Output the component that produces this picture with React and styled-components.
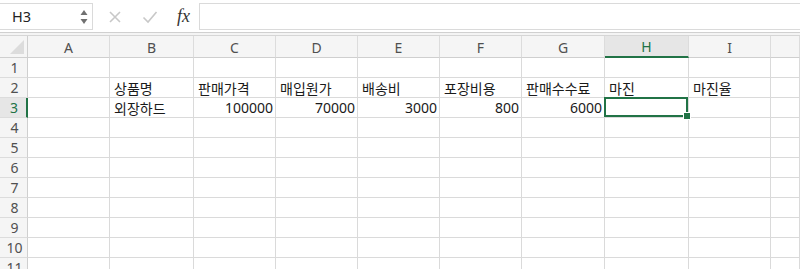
import styled, { createGlobalStyle } from "styled-components";

const GlobalStyle = createGlobalStyle`
  html, body {
    margin: 0;
    padding: 0;
    background: #ffffff;
    overflow: hidden;
  }
  body {
    font-family: "Noto Sans", "Noto Sans CJK KR", sans-serif;
  }
`;

const COLUMNS = ["A", "B", "C", "D", "E", "F", "G", "H", "I", ""];
const WIDTHS = [82, 84, 82, 82, 82, 82, 83, 84, 82];
const SELECTED_COL = "H";
const SELECTED_ROW = 3;

// cell values keyed by row, then column
const DATA = {
  2: {
    B: "상품명",
    C: "판매가격",
    D: "매입원가",
    E: "배송비",
    F: "포장비용",
    G: "판매수수료",
    H: "마진",
    I: "마진율",
  },
  3: {
    B: "외장하드",
    C: 100000,
    D: 70000,
    E: 3000,
    F: 800,
    G: 6000,
  },
};

function App() {
  const rows = Array.from({ length: 11 }, (_, i) => i + 1);

  return (
    <>
      <GlobalStyle />
      <Page>
        <FormulaBar>
          <NameBox>
            <span>H3</span>
            <Spinner>
              <svg width="8" height="16" viewBox="0 0 8 16">
                <path d="M4 1 L7.5 6 L0.5 6 Z" fill="#707070" />
                <path d="M4 15 L7.5 10 L0.5 10 Z" fill="#707070" />
              </svg>
            </Spinner>
          </NameBox>
          <Tools>
            <svg width="14" height="14" viewBox="0 0 14 14">
              <path d="M2 2 L12 12 M12 2 L2 12" stroke="#c8c8c8" strokeWidth="1.6" />
            </svg>
            <svg width="16" height="14" viewBox="0 0 16 14">
              <path d="M1.5 7.5 L6 12 L14.5 2" stroke="#c8c8c8" strokeWidth="1.6" fill="none" />
            </svg>
            <Fx>fx</Fx>
          </Tools>
          <FormulaInput />
        </FormulaBar>
        <Divider />
        <Grid>
          <Corner />
          {COLUMNS.map((c) => (
            <ColHeader key={c || "rest"} $active={c === SELECTED_COL}>
              {c}
            </ColHeader>
          ))}
          {rows.map((r) => (
            <Row key={r} r={r} />
          ))}
        </Grid>
      </Page>
    </>
  );
}

function Row({ r }) {
  return (
    <>
      <RowHeader $active={r === SELECTED_ROW}>{r}</RowHeader>
      {COLUMNS.map((c) => {
        const value = DATA[r] && DATA[r][c];
        const isNum = typeof value === "number";
        return (
          <Cell
            key={c || "rest"}
            $num={isNum}
            $selected={r === SELECTED_ROW && c === SELECTED_COL}
          >
            {value}
          </Cell>
        );
      })}
    </>
  );
}

export default App;

// Styled Components
const Page = styled.div`
  width: 800px;
  height: 269px;
  overflow: hidden;
  background: #ffffff;
`;

const FormulaBar = styled.div`
  display: flex;
  align-items: center;
  height: 32px;
  padding-top: 1px;
  box-sizing: border-box;
  background: #ffffff;
`;

const NameBox = styled.div`
  display: flex;
  align-items: center;
  justify-content: space-between;
  width: 93px;
  height: 27px;
  box-sizing: border-box;
  border: 1px solid #dadada;
  border-left: none;
  padding: 0 4px 0 12px;
  font-size: 14.5px;
  color: #222;

  span {
    line-height: 1;
  }
`;

const Spinner = styled.div`
  display: flex;
  align-items: center;
`;

const Tools = styled.div`
  display: flex;
  align-items: center;
  gap: 20px;
  width: 106px;
  box-sizing: border-box;
  padding-left: 15px;
`;

const Fx = styled.span`
  font-family: "Liberation Serif", "DejaVu Serif", serif;
  font-style: italic;
  font-size: 18px;
  color: #333;
  margin-left: -1px;
`;

const FormulaInput = styled.div`
  flex: 1;
  height: 27px;
  box-sizing: border-box;
  border: 1px solid #dadada;
  border-right: none;
`;

const Divider = styled.div`
  height: 4px;
  box-sizing: border-box;
  border-top: 1px solid #d0d0d0;
  border-bottom: 1px solid #d6d6d6;
  background: #f4f4f4;
`;

const Grid = styled.div`
  display: grid;
  grid-template-columns: 28px ${WIDTHS.map((w) => `${w}px`).join(" ")} 1fr;
  grid-template-rows: 22px;
  grid-auto-rows: 20px;
`;

const Corner = styled.div`
  position: relative;
  background: #f5f5f5;
  border-right: 1px solid #cfcfcf;
  border-bottom: 1px solid #cfcfcf;
  box-sizing: border-box;

  &::after {
    content: "";
    position: absolute;
    right: 3px;
    bottom: 3px;
    width: 0;
    height: 0;
    border-left: 14px solid transparent;
    border-bottom: 14px solid #dcdcdc;
  }
`;

const ColHeader = styled.div`
  display: flex;
  align-items: center;
  justify-content: center;
  box-sizing: border-box;
  background: ${(p) => (p.$active ? "#e6e6e6" : "#f5f5f5")};
  border-right: 1px solid #dcdcdc;
  border-bottom: ${(p) => (p.$active ? "2px solid #217346" : "1px solid #cfcfcf")};
  color: ${(p) => (p.$active ? "#217346" : "#505050")};
  font-size: 14px;
  padding-top: 1px;
`;

const RowHeader = styled.div`
  display: flex;
  align-items: center;
  justify-content: center;
  box-sizing: border-box;
  background: ${(p) => (p.$active ? "#e6e6e6" : "#f5f5f5")};
  border-right: ${(p) => (p.$active ? "2px solid #217346" : "1px solid #cfcfcf")};
  border-bottom: 1px solid #dcdcdc;
  color: ${(p) => (p.$active ? "#217346" : "#505050")};
  font-size: 14px;
  padding-left: 2px;
`;

const Cell = styled.div`
  position: relative;
  display: flex;
  align-items: center;
  justify-content: ${(p) => (p.$num ? "flex-end" : "flex-start")};
  box-sizing: border-box;
  border-right: 1px solid #dadada;
  border-bottom: 1px solid #dadada;
  padding: 0 2px 0 4px;
  font-size: 14px;
  color: #1a1a1a;
  white-space: nowrap;
  overflow: visible;

  ${(p) =>
    p.$selected &&
    `
    &::after {
      content: "";
      position: absolute;
      left: -1px;
      top: -1px;
      right: 0;
      bottom: 0;
      border: 2px solid #217346;
      z-index: 1;
    }
    &::before {
      content: "";
      position: absolute;
      right: -3px;
      bottom: -3px;
      width: 6px;
      height: 6px;
      background: #217346;
      border: 1px solid #ffffff;
      z-index: 2;
    }
  `}
`;
